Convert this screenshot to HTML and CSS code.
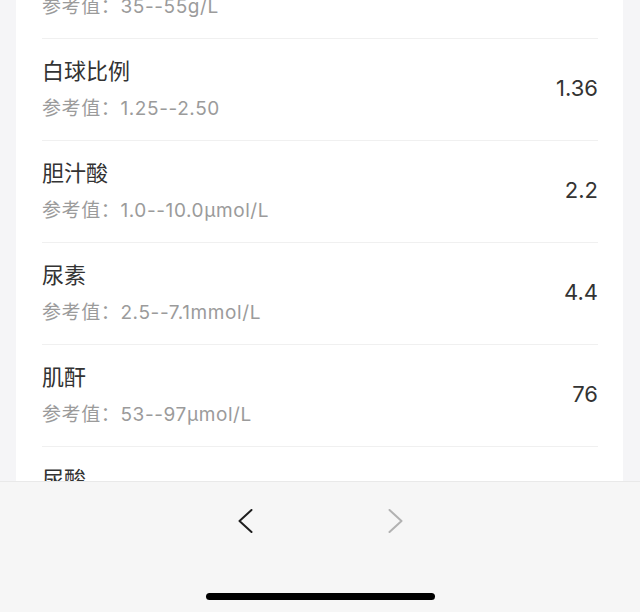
FILE: index.html
```html
<!DOCTYPE html>
<html lang="zh">
<head>
<meta charset="utf-8">
<link rel="stylesheet" href="styles.css">
</head>
<body>
<div class="app">
  <main class="scroll">
    <div class="card">
      <div class="row">
        <div class="info"><div class="name">白蛋白</div><div class="ref">参考值：35--55g/L</div></div>
        <div class="val">42.1</div>
      </div>
      <div class="row">
        <div class="info"><div class="name">白球比例</div><div class="ref">参考值：1.25--2.50</div></div>
        <div class="val">1.36</div>
      </div>
      <div class="row">
        <div class="info"><div class="name">胆汁酸</div><div class="ref">参考值：1.0--10.0μmol/L</div></div>
        <div class="val">2.2</div>
      </div>
      <div class="row">
        <div class="info"><div class="name">尿素</div><div class="ref">参考值：2.5--7.1mmol/L</div></div>
        <div class="val">4.4</div>
      </div>
      <div class="row">
        <div class="info"><div class="name">肌酐</div><div class="ref">参考值：53--97μmol/L</div></div>
        <div class="val">76</div>
      </div>
      <div class="row">
        <div class="info"><div class="name">尿酸</div><div class="ref">参考值：150--440μmol/L</div></div>
        <div class="val">320</div>
      </div>
    </div>
  </main>
  <footer class="bar">
    <nav class="nav">
      <button class="btn"><svg width="15" height="24" viewBox="0 0 15 24"><polyline points="13.5,1 1.5,12 13.5,23" fill="none" stroke="#1e1e1e" stroke-width="2" stroke-linecap="round" stroke-linejoin="round"/></svg></button>
      <button class="btn"><svg width="15" height="24" viewBox="0 0 15 24"><polyline points="1.5,1 13.5,12 1.5,23" fill="none" stroke="#b2b2b2" stroke-width="2" stroke-linecap="round" stroke-linejoin="round"/></svg></button>
    </nav>
    <div class="home"></div>
  </footer>
</div>
</body>
</html>
```
FILE: styles.css
```css
* { box-sizing: border-box; }
html, body { margin: 0; padding: 0; }
body {
  font-family: Inter, "Noto Sans CJK SC", sans-serif;
  background: #f5f5f7;
}
.app {
  height: 612px;
  display: flex;
  flex-direction: column;
  overflow: hidden;
}
.scroll {
  flex: 1;
  overflow: hidden;
}
.card {
  margin: -63px 17px 0 16px;
  background: #fff;
  padding: 0 25px 0 26px;
}
.row {
  display: flex;
  align-items: center;
  justify-content: space-between;
  border-bottom: 1px solid #f0f0f0;
  padding: 19px 0 19px;
}
.name {
  font-size: 22px;
  line-height: 26px;
  color: #333;
}
.ref {
  margin-top: 13px;
  font-size: 19px;
  line-height: 24px;
  letter-spacing: 0.6px;
  color: #9b9b9b;
}
.val {
  font-size: 22px;
  color: #333;
  padding-bottom: 3px;
}
.bar {
  height: 131px;
  flex: none;
  background: #f6f6f6;
  border-top: 1px solid #e9e9e9;
  display: flex;
  flex-direction: column;
  align-items: center;
}
.nav {
  height: 78px;
  display: flex;
  align-items: center;
  justify-content: center;
  gap: 106px;
}
.btn {
  width: 44px;
  height: 44px;
  border: 0;
  background: none;
  padding: 0;
  display: flex;
  align-items: center;
  justify-content: center;
}
.home {
  margin-top: 33px;
  width: 229px;
  height: 7px;
  border-radius: 4px;
  background: #000;
}
```
